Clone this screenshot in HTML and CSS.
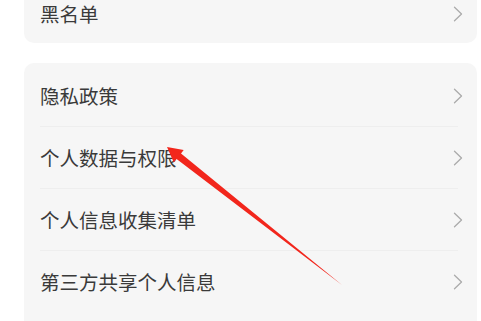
FILE: index.html
```html
<!DOCTYPE html>
<html lang="zh-CN">
<head>
<meta charset="utf-8">
<title>设置</title>
<link rel="stylesheet" href="styles.css">
</head>
<body>
<div class="page">
  <div class="card card-top">
    <div class="row last">
      <span class="label">黑名单</span>
      <svg class="chev" viewBox="0 0 10 16" width="10" height="16"><path d="M1.5 1.2 L8.5 8 L1.5 14.8" /></svg>
    </div>
  </div>
  <div class="card card-main">
    <div class="row">
      <span class="label">隐私政策</span>
      <svg class="chev" viewBox="0 0 10 16" width="10" height="16"><path d="M1.5 1.2 L8.5 8 L1.5 14.8" /></svg>
    </div>
    <div class="row">
      <span class="label">个人数据与权限</span>
      <svg class="chev" viewBox="0 0 10 16" width="10" height="16"><path d="M1.5 1.2 L8.5 8 L1.5 14.8" /></svg>
    </div>
    <div class="row">
      <span class="label">个人信息收集清单</span>
      <svg class="chev" viewBox="0 0 10 16" width="10" height="16"><path d="M1.5 1.2 L8.5 8 L1.5 14.8" /></svg>
    </div>
    <div class="row last">
      <span class="label">第三方共享个人信息</span>
      <svg class="chev" viewBox="0 0 10 16" width="10" height="16"><path d="M1.5 1.2 L8.5 8 L1.5 14.8" /></svg>
    </div>
  </div>
  <svg class="arrow" viewBox="0 0 481 321" width="481" height="321">
    <polygon class="arrow-shape" points="167,162 183.7,165 181,168.6 342,300 176.6,174 173.8,177.6" />
  </svg>
</div>
</body>
</html>
```
FILE: styles.css
```css
html, body {
  margin: 0;
  padding: 0;
  background: #ffffff;
}
body {
  width: 481px;
  height: 321px;
  overflow: hidden;
  font-family: "Noto Sans CJK SC", "Noto Sans", sans-serif;
  color: #3a3a3a;
}
.page {
  position: relative;
  width: 481px;
  height: 321px;
}
.card {
  margin: 0 4px 0 24px;
  background: #f6f6f6;
  border-radius: 10px;
  display: flex;
  flex-direction: column;
}
.card-top {
  margin-top: -15px;
  height: 58px;
  justify-content: center;
}
.card-main {
  margin-top: 20px;
  padding-top: 2px;
  padding-bottom: 20px;
}
.row {
  height: 62px;
  margin: 0 19px 0 16px;
  box-sizing: border-box;
  border-bottom: 1px solid #eeeeee;
  display: flex;
  align-items: center;
  justify-content: space-between;
}
.card-top .row {
  height: 58px;
}
.row.last {
  border-bottom: none;
}
.label {
  font-size: 19.5px;
  line-height: 1;
  letter-spacing: 0;
}
.chev {
  margin-right: -5px;
  flex: none;
}
.chev path {
  fill: none;
  stroke: #ababab;
  stroke-width: 1.3;
  stroke-linecap: round;
  stroke-linejoin: round;
}
.arrow {
  position: absolute;
  left: 0;
  top: 0;
  pointer-events: none;
}
.arrow-shape {
  fill: #f2261c;
}
```
